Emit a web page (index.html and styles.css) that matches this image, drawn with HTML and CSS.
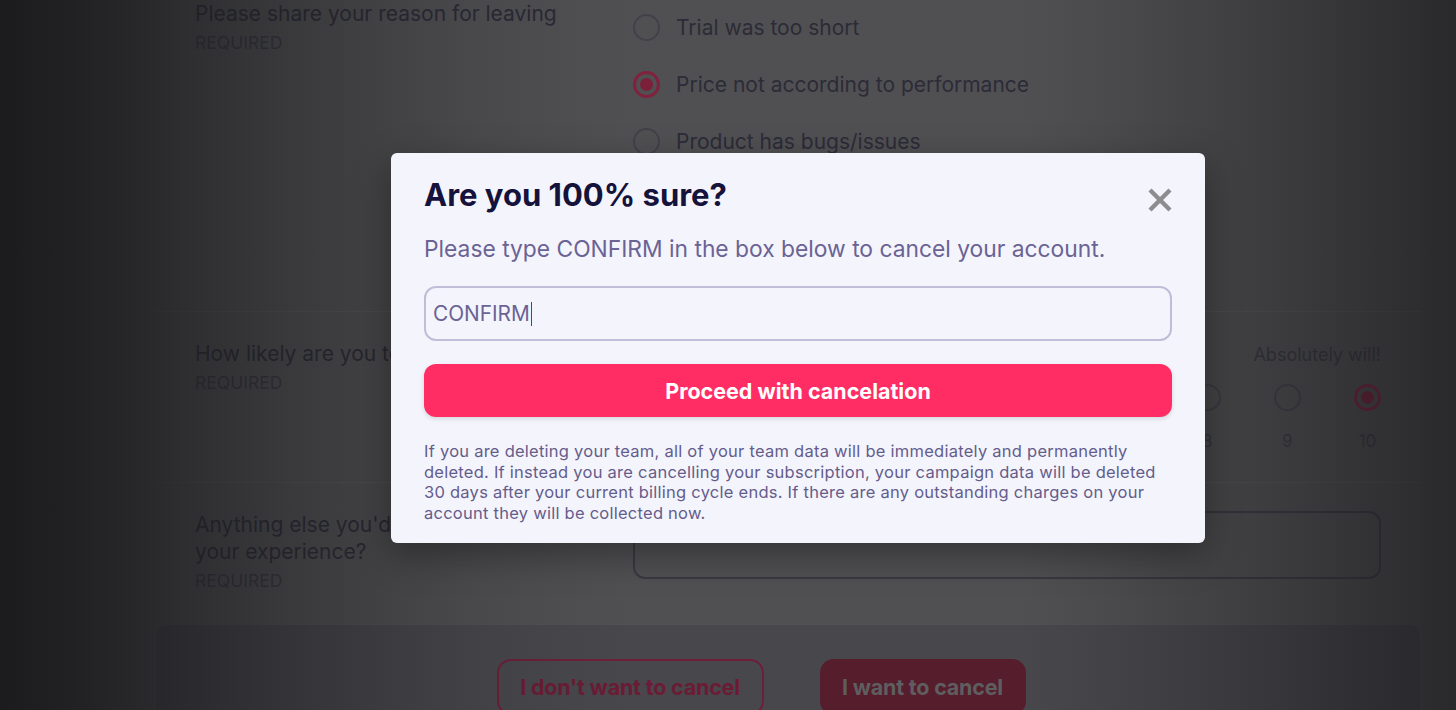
FILE: index.html
```html
<!DOCTYPE html>
<html lang="en">
<head>
<meta charset="utf-8">
<title>Cancel your account</title>
<link rel="stylesheet" href="styles.css">
</head>
<body>
<div class="page">
  <main class="survey">
    <section class="row row-reason">
      <div class="q">
        <div class="q-title">Please share your reason for leaving</div>
        <div class="q-req">REQUIRED</div>
      </div>
      <ul class="options">
        <li class="option"><span class="radio"></span>Trial was too short</li>
        <li class="option"><span class="radio checked"></span>Price not according to performance</li>
        <li class="option"><span class="radio"></span>Product has bugs/issues</li>
      </ul>
    </section>

    <section class="row row-nps">
      <div class="q">
        <div class="q-title">How likely are you to come back?</div>
        <div class="q-req">REQUIRED</div>
      </div>
      <div class="answers">
        <div class="scale-labels"><span>Absolutely will!</span></div>
        <div class="scale">
          <div class="scale-item"><span class="radio"></span></div>
          <div class="scale-item"><span class="radio"></span></div>
          <div class="scale-item"><span class="radio"></span></div>
          <div class="scale-item"><span class="radio"></span></div>
          <div class="scale-item"><span class="radio"></span></div>
          <div class="scale-item"><span class="radio"></span></div>
          <div class="scale-item"><span class="radio"></span></div>
          <div class="scale-item"><span class="radio"></span><span class="num">8</span></div>
          <div class="scale-item"><span class="radio"></span><span class="num">9</span></div>
          <div class="scale-item"><span class="radio checked"></span><span class="num">10</span></div>
        </div>
      </div>
    </section>

    <section class="row row-other">
      <div class="q">
        <div class="q-title">Anything else you'd like to share about<br>your experience?</div>
        <div class="q-req">REQUIRED</div>
      </div>
      <div class="answers">
        <div class="textarea"></div>
      </div>
    </section>

    <footer class="actions">
      <button class="btn btn-outline" type="button">I don't want to cancel</button>
      <button class="btn btn-solid" type="button">I want to cancel</button>
    </footer>
  </main>
</div>

<div class="scrim"></div>

<div class="modal" role="dialog" aria-labelledby="modal-title">
  <div class="modal-head">
    <h2 class="modal-title" id="modal-title">Are you 100% sure?</h2>
    <button class="modal-close" type="button" aria-label="Close">
      <svg viewBox="0 0 24 24" width="24" height="24"><path d="M2 2L22 22M22 2L2 22" stroke="#8d8d8f" stroke-width="4.4" stroke-linecap="butt" fill="none"/></svg>
    </button>
  </div>
  <p class="modal-sub">Please type CONFIRM in the box below to cancel your account.</p>
  <div class="field"><span class="field-text">CONFIRM</span><span class="caret"></span></div>
  <button class="btn-proceed" type="button">Proceed with cancelation</button>
  <p class="modal-note">If you are deleting your team, all of your team data will be immediately and permanently deleted. If instead you are cancelling your subscription, your campaign data will be deleted 30 days after your current billing cycle ends. If there are any outstanding charges on your account they will be collected now.</p>
</div>
</body>
</html>
```

FILE: styles.css
```css
* { box-sizing: border-box; }

html, body {
  margin: 0;
  padding: 0;
}

body {
  width: 1456px;
  height: 710px;
  overflow: hidden;
  position: relative;
  background: #4e4e50;
  font-family: "Inter", "Noto Sans", "Liberation Sans", sans-serif;
}

/* ---------- dimmed page underneath ---------- */
.page {
  margin-top: -28px;
  padding-left: 155px;
}

.survey {
  width: 1266px;
  background: #505052;
}

.row {
  display: grid;
  grid-template-columns: 438px 748px;
  padding: 28px 40px 0;
  border-bottom: 1px solid #58585b;
}

.row-reason { padding-bottom: 156px; }
.row-nps { padding-bottom: 29px; }
.row-other { padding-bottom: 33px; border-bottom: none; }

.q-title {
  font-size: 21px;
  line-height: 27px;
  color: #2a2936;
}

.q-req {
  margin-top: 6px;
  font-size: 17.5px;
  line-height: 20px;
  color: #373640;
}

.options {
  list-style: none;
  margin: 14px 0 0;
  padding: 0;
  display: flex;
  flex-direction: column;
  gap: 30px;
}

.option {
  display: flex;
  align-items: center;
  gap: 16px;
  height: 27px;
  font-size: 21px;
  color: #2c2b38;
}

.radio {
  flex: none;
  width: 27px;
  height: 27px;
  border-radius: 50%;
  border: 2.5px solid #42414a;
  display: flex;
  align-items: center;
  justify-content: center;
}

.radio.checked {
  border: 3px solid #80223e;
}

.radio.checked::after {
  content: "";
  width: 13px;
  height: 13px;
  border-radius: 50%;
  background: #7c1f3a;
}

.scale-labels {
  display: flex;
  justify-content: flex-end;
  margin-top: 3px;
  font-size: 18px;
  line-height: 24px;
  color: #363540;
}

.scale {
  display: flex;
  justify-content: space-between;
  margin-top: 17px;
}

.scale-item {
  width: 27px;
  display: flex;
  flex-direction: column;
  align-items: center;
}

.num {
  margin-top: 18px;
  font-size: 17px;
  line-height: 24px;
  color: #3a3943;
}

.textarea {
  height: 68px;
  border: 2px solid #3a3943;
  border-radius: 12px;
}

.actions {
  display: flex;
  justify-content: center;
  gap: 56px;
  padding: 34px 54px 34px 0;
  background: #47474c;
  border: 1px solid #525256;
  border-radius: 12px 12px 0 0;
}

.btn {
  height: 56px;
  border-radius: 14px;
  font-family: inherit;
  font-size: 21.5px;
  font-weight: 700;
  letter-spacing: -0.2px;
}

.btn-outline {
  width: 267px;
  background: transparent;
  border: 2.5px solid #6e1f37;
  color: #6c1b34;
}

.btn-solid {
  width: 206px;
  background: #561d2c;
  border: none;
  color: #5e5e60;
}

/* ---------- scrim with vignette ---------- */
.scrim {
  position: absolute;
  inset: 0;
  pointer-events: none;
  background: linear-gradient(to right,
    rgba(26, 26, 29, 0.97) 0%,
    rgba(26, 26, 29, 0.86) 5%,
    rgba(26, 26, 29, 0.72) 10%,
    rgba(26, 26, 29, 0.56) 15%,
    rgba(26, 26, 29, 0.42) 20%,
    rgba(26, 26, 29, 0.25) 27%,
    rgba(26, 26, 29, 0.12) 33%,
    rgba(26, 26, 29, 0.03) 40%,
    rgba(26, 26, 29, 0) 44%,
    rgba(26, 26, 29, 0) 70%,
    rgba(26, 26, 29, 0.1) 76%,
    rgba(26, 26, 29, 0.24) 82%,
    rgba(26, 26, 29, 0.38) 88%,
    rgba(26, 26, 29, 0.55) 94%,
    rgba(26, 26, 29, 0.7) 100%);
}

/* ---------- modal ---------- */
.modal {
  position: absolute;
  left: 391px;
  top: 153px;
  width: 814px;
  height: 390px;
  padding: 22px 33px 0;
  background: #f4f4fd;
  border-radius: 6px;
  box-shadow: 0 12px 36px rgba(0, 0, 0, 0.35);
  z-index: 2;
}

.modal-head {
  display: flex;
  justify-content: space-between;
  align-items: flex-start;
}

.modal-title {
  margin: 0;
  font-size: 31px;
  line-height: 40px;
  font-weight: 700;
  color: #15123b;
}

.modal-close {
  margin: 13px 0 0;
  padding: 0;
  border: none;
  background: none;
  width: 24px;
  height: 24px;
}

.modal-close svg { display: block; }

.modal-sub {
  margin: 19px 0 0;
  font-size: 22.8px;
  line-height: 30px;
  color: #6a6394;
}

.field {
  margin-top: 22px;
  height: 55px;
  border: 2px solid #c0bdd8;
  border-radius: 12px;
  padding-left: 7px;
  display: flex;
  align-items: center;
}

.field-text {
  font-size: 20.8px;
  color: #6a6394;
}

.caret {
  width: 1px;
  height: 24px;
  margin-left: 1px;
  background: #4a4470;
}

.btn-proceed {
  display: block;
  width: 100%;
  height: 53px;
  margin-top: 23px;
  border: none;
  border-radius: 12px;
  background: #ff2d64;
  color: #ffffff;
  font-family: inherit;
  font-size: 21.5px;
  font-weight: 700;
  box-shadow: 0 2px 5px rgba(0, 0, 0, 0.12);
}

.modal-note {
  margin: 24px 0 0;
  font-size: 16.5px;
  line-height: 20.5px;
  letter-spacing: 0.25px;
  color: #645d8b;
}
```
